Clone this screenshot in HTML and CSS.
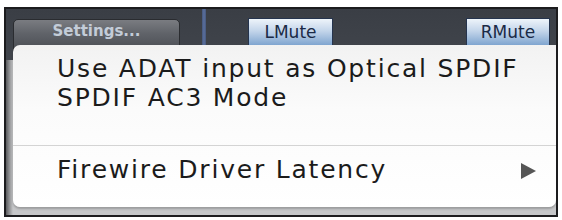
FILE: index.html
```html
<!DOCTYPE html>
<html lang="en">

<head>
    <meta charset="UTF-8" />
    <title>Settings menu</title>
    <link rel="stylesheet" href="styles.css">
</head>

<body>

    <div class="frame">
        <div class="toolbar">
            <button class="settings-btn">Settings...</button>
            <span class="divider"></span>
            <button class="mute-btn lmute">LMute</button>
            <button class="mute-btn rmute">RMute</button>
        </div>
        <div class="panel"></div>

        <!-- ポップアップメニュー -->
        <div class="popup-menu">
            <div class="menu-item">Use ADAT input as Optical SPDIF</div>
            <div class="menu-item">SPDIF AC3 Mode</div>
            <div class="menu-sep"></div>
            <div class="menu-item submenu">
                <span>Firewire Driver Latency</span>
                <span class="arrow"></span>
            </div>
        </div>
    </div>

</body>

</html>
```

FILE: styles.css
```css
body {
    margin: 0;
    background: #ffffff;
    font-family: 'DejaVu Sans', 'Liberation Sans', sans-serif;
}

.frame {
    position: relative;
    margin: 7px 0 0 4px;
    width: 550px;
    height: 206px;
    border: solid 2px #1c1c1e;
    background: #3b3f46;
    display: flex;
    flex-direction: column;
    overflow: hidden;
}

.toolbar {
    display: flex;
    align-items: flex-start;
    height: 51px;
    padding: 9px 0 0 7px;
    box-sizing: border-box;
    background: linear-gradient(#3a3e45, #41454c);
}

button {
    font-family: inherit;
    border: none;
    padding: 0;
    margin: 0;
    height: 32px;
    box-sizing: border-box;
}

.settings-btn {
    width: 167px;
    margin-top: 1px;
    border-radius: 5px 5px 0 0;
    background: linear-gradient(#7a7c81, #606369 45%, #4b4e54);
    border: solid 1px #2a2c30;
    color: #c3ccd8;
    font-size: 15px;
    font-weight: bold;
    padding-bottom: 8px;
}

.divider {
    width: 4px;
    height: 42px;
    margin: -9px 0 0 22px;
    background: linear-gradient(to right, #46587c, #5a6f9e, #46587c);
}

.mute-btn {
    width: 85px;
    margin-top: 0;
    background: linear-gradient(#eef4fa, #c3d5ea 40%, #6c97c8);
    border: solid 1px #25344e;
    color: #1a2a46;
    font-size: 17px;
    padding-bottom: 5px;
}

.lmute {
    margin-left: 42px;
}

.rmute {
    margin-left: 133px;
    width: 84px;
}

.panel {
    flex: 1;
    background: linear-gradient(to right, #5a5b5e, #9a9b9d 4px, #c6c7c9 7px);
}

.popup-menu {
    position: absolute;
    left: 7px;
    top: 36px;
    right: 0;
    height: 162px;
    box-sizing: border-box;
    padding: 9px 0 0 0;
    background: linear-gradient(#f2f2f2, #fbfbfb 40%, #ffffff);
    border-radius: 7px 0 7px 7px;
    box-shadow: 0 2px 2px rgba(60, 60, 60, 0.3);
    color: #1b1b1b;
    font-size: 25px;
    letter-spacing: 1.8px;
}

.menu-item {
    line-height: 29px;
    padding-left: 44px;
}

.menu-sep {
    height: 1px;
    margin: 33px 0 9px 0;
    background: #d4d4d4;
}

.submenu {
    display: flex;
    align-items: center;
    justify-content: space-between;
    padding-right: 20px;
}

.arrow {
    width: 0;
    height: 0;
    border-top: solid 8px transparent;
    border-bottom: solid 8px transparent;
    border-left: solid 15px #565656;
    margin-top: 2px;
}
```
